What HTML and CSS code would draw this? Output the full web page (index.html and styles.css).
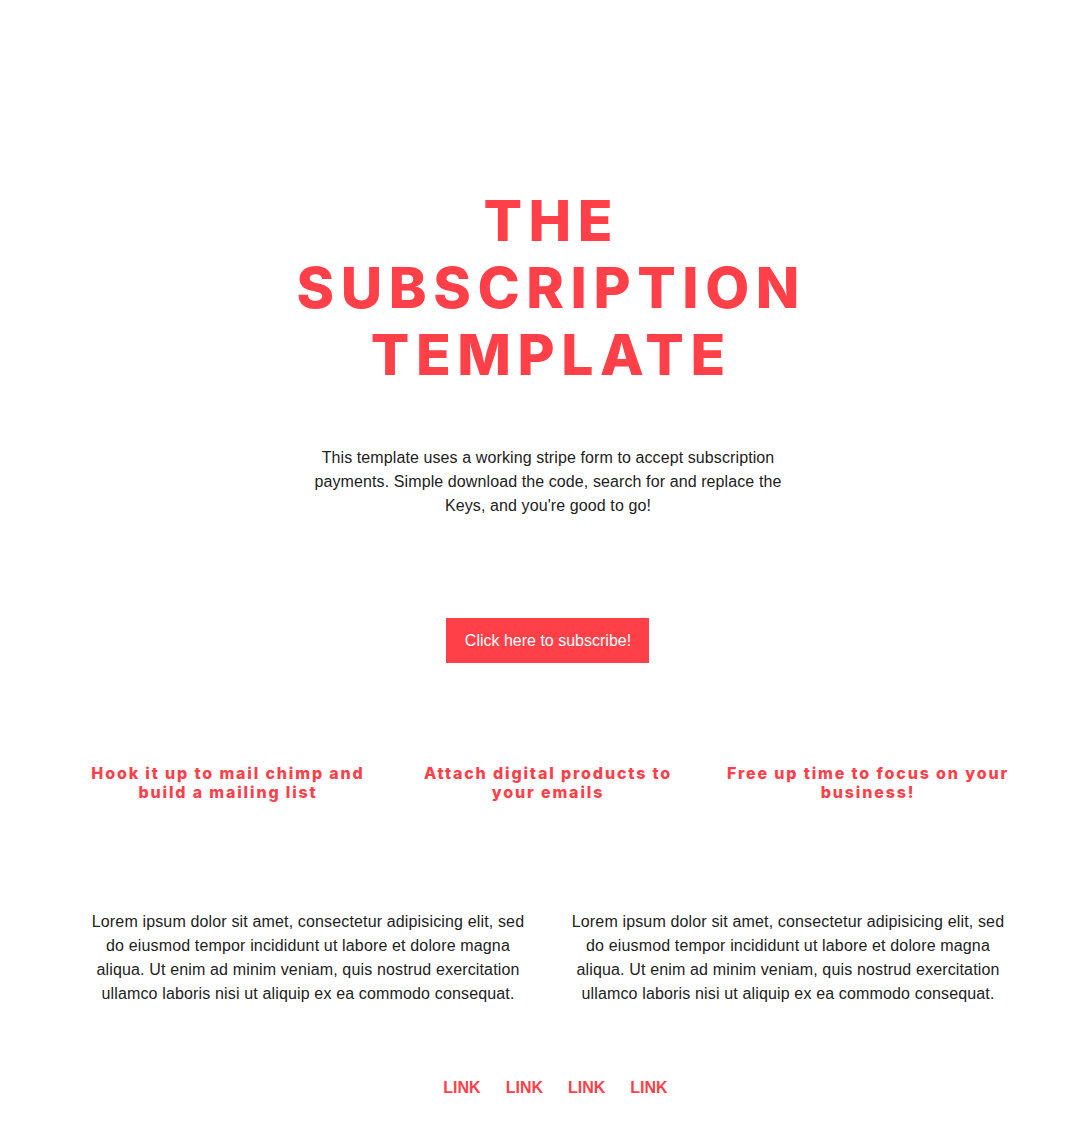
FILE: index.html
```html
<!DOCTYPE html>
<html lang="en">
<head>
<meta charset="utf-8">
<title>The Subscription Template</title>
<link rel="stylesheet" href="styles.css">
</head>
<body>
<div class="page">
  <header class="hero">
    <h1 class="title">THE<br>SUBSCRIPTION<br>TEMPLATE</h1>
    <p class="intro">This template uses a working stripe form to accept subscription payments. Simple download the code, search for and replace the Keys, and you're good to go!</p>
    <a class="cta" href="#">Click here to subscribe!</a>
  </header>
  <section class="features">
    <h3 class="feature">Hook it up to mail chimp and build a mailing list</h3>
    <h3 class="feature">Attach digital products to your emails</h3>
    <h3 class="feature">Free up time to focus on your business!</h3>
  </section>
  <section class="copy">
    <p class="copy-col">Lorem ipsum dolor sit amet, consectetur adipisicing elit, sed do eiusmod tempor incididunt ut labore et dolore magna aliqua. Ut enim ad minim veniam, quis nostrud exercitation ullamco laboris nisi ut aliquip ex ea commodo consequat.</p>
    <p class="copy-col">Lorem ipsum dolor sit amet, consectetur adipisicing elit, sed do eiusmod tempor incididunt ut labore et dolore magna aliqua. Ut enim ad minim veniam, quis nostrud exercitation ullamco laboris nisi ut aliquip ex ea commodo consequat.</p>
  </section>
  <footer class="links">
    <a href="#">LINK</a>
    <a href="#">LINK</a>
    <a href="#">LINK</a>
    <a href="#">LINK</a>
  </footer>
</div>
</body>
</html>
```
FILE: styles.css
```css
html, body {
  margin: 0;
  padding: 0;
  background: #ffffff;
}
body {
  font-family: "Liberation Sans", Arial, sans-serif;
  color: #222222;
  font-size: 16px;
}
.page {
  width: 960px;
  margin-left: 68px;
  display: flex;
  flex-direction: column;
  align-items: center;
}
.hero {
  display: flex;
  flex-direction: column;
  align-items: center;
  padding-top: 187px;
}
.title {
  margin: 0;
  font-family: Inter, "Liberation Sans", sans-serif;
  font-weight: 800;
  font-size: 57px;
  line-height: 67px;
  letter-spacing: 0.115em;
  color: #ff4049;
  text-align: center;
  padding-left: 0.115em;
}
.intro {
  margin: 58px 0 0;
  width: 480px;
  text-align: center;
  line-height: 24px;
  font-size: 16px;
  letter-spacing: 0.1px;
}
.cta {
  margin-top: 100px;
  display: block;
  background: #ff4049;
  color: #ffffff;
  text-decoration: none;
  width: 203px;
  height: 45px;
  line-height: 45px;
  text-align: center;
  font-size: 16px;
}
.features {
  margin-top: 101px;
  display: grid;
  grid-template-columns: repeat(3, 1fr);
  width: 960px;
}
.feature {
  margin: 0;
  padding: 0 18px;
  text-align: center;
  font-family: Inter, "Liberation Sans", sans-serif;
  font-weight: 800;
  font-size: 16px;
  line-height: 19px;
  letter-spacing: 1.85px;
  color: #ff4049;
}
.copy {
  margin-top: 108px;
  display: grid;
  grid-template-columns: 1fr 1fr;
  width: 960px;
}
.copy-col {
  margin: 0;
  padding: 0 22px;
  text-align: center;
  line-height: 24px;
  font-size: 16px;
  letter-spacing: 0.15px;
}
.links {
  margin-top: 73px;
  display: flex;
  gap: 25px;
  padding-left: 15px;
  padding-bottom: 30px;
}
.links a {
  color: #ff4049;
  text-decoration: none;
  font-weight: 700;
  font-size: 16px;
}
```
